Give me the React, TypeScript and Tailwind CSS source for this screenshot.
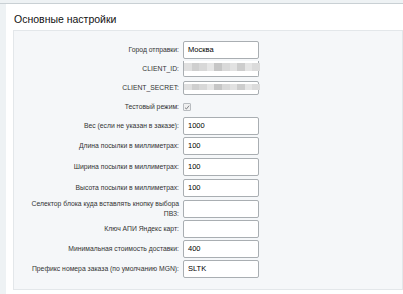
const font = { fontFamily: '"Liberation Sans", Arial, sans-serif' };

type Row = {
  label: string;
  h: string;
  kind: "input" | "blur" | "blurBox" | "check";
  value?: string;
};

const rows: Row[] = [
  { label: "Город отправки:", h: "h-[19px]", kind: "input", value: "Москва" },
  { label: "CLIENT_ID:", h: "h-[19px]", kind: "blur" },
  { label: "CLIENT_SECRET:", h: "h-[20px]", kind: "blurBox" },
  { label: "Тестовый режим:", h: "h-[18px]", kind: "check" },
  { label: "Вес (если не указан в заказе):", h: "h-[19px]", kind: "input", value: "1000" },
  { label: "Длина посылки в миллиметрах:", h: "h-[22px]", kind: "input", value: "100" },
  { label: "Ширина посылки в миллиметрах:", h: "h-[20px]", kind: "input", value: "100" },
  { label: "Высота посылки в миллиметрах:", h: "h-[21px]", kind: "input", value: "100" },
  { label: "Селектор блока куда вставлять кнопку выбора ПВЗ:", h: "h-[21px]", kind: "input", value: "" },
  { label: "Ключ АПИ Яндекс карт:", h: "h-[20px]", kind: "input", value: "" },
  { label: "Минимальная стоимость доставки:", h: "h-[20px]", kind: "input", value: "400" },
  { label: "Префикс номера заказа (по умолчанию MGN):", h: "h-[19px]", kind: "input", value: "SLTK" },
];

const blurShades = ["#e0e0e0", "#cfcfcf", "#d8d8d8", "#e6e6e6", "#c6c6c6", "#d9d9d9", "#e2e2e2", "#cdcdcd", "#e5e5e5", "#dbdbdb"];

function Blur() {
  return (
    <div className="flex h-full w-full">
      {blurShades.map((c, i) => (
        <div key={i} className="h-full flex-1" style={{ background: c }} />
      ))}
    </div>
  );
}

function Field({ row }: { row: Row }) {
  if (row.kind === "check") {
    return (
      <div className="flex h-[8px] w-[8px] items-center justify-center rounded-[1px] border border-[#b8bcc0] bg-[#f0f0f0]">
        <svg viewBox="0 0 8 8" className="h-[7px] w-[7px]">
          <path d="M1.3 4.2 L3.2 6 L6.8 1.6" fill="none" stroke="#7c8084" strokeWidth="1.3" />
        </svg>
      </div>
    );
  }
  if (row.kind === "blur") {
    return (
      <div className="relative h-[16px] w-[76px] rounded-b-[2px] border-b border-l border-r border-[#a9aeb2] bg-white">
        <div className="absolute left-0 top-[2px] h-[8px] w-[76px]">
          <Blur />
        </div>
      </div>
    );
  }
  if (row.kind === "blurBox") {
    return (
      <div className="relative h-[14px] w-[76px] rounded-[2px] border border-[#a9aeb2] bg-white">
        <div className="absolute left-0 top-[2px] h-[6px] w-[76px]">
          <Blur />
        </div>
      </div>
    );
  }
  return (
    <div className="flex h-[18px] w-[76px] items-center rounded-[2px] border border-[#a9aeb2] bg-white pl-[4px] text-[7.5px] text-black">
      {row.value}
    </div>
  );
}

export default function App() {
  return (
    <div className="h-[294px] w-[403px] overflow-hidden bg-[#eef2f4]" style={font}>
      <div className="h-[4px] border-b border-[#c9d0d4]" />
      <div className="ml-[6px] h-[290px] bg-white">
        <div className="px-[8px] pt-[9px] text-[10.5px] leading-[13px] text-[#111]">Основные настройки</div>
        <div className="ml-[7px] mt-[4px] h-[260px] border border-[#e3e7ea] bg-[#f5f7f9] pt-[9px]">
          {rows.map((row) => (
            <div key={row.label} className={`flex items-center ${row.h}`}>
              <div className="ml-[12px] w-[157px] pr-[4px] text-right text-[6.8px] leading-[10px] text-[#333]">
                {row.label}
              </div>
              <Field row={row} />
            </div>
          ))}
        </div>
      </div>
    </div>
  );
}
